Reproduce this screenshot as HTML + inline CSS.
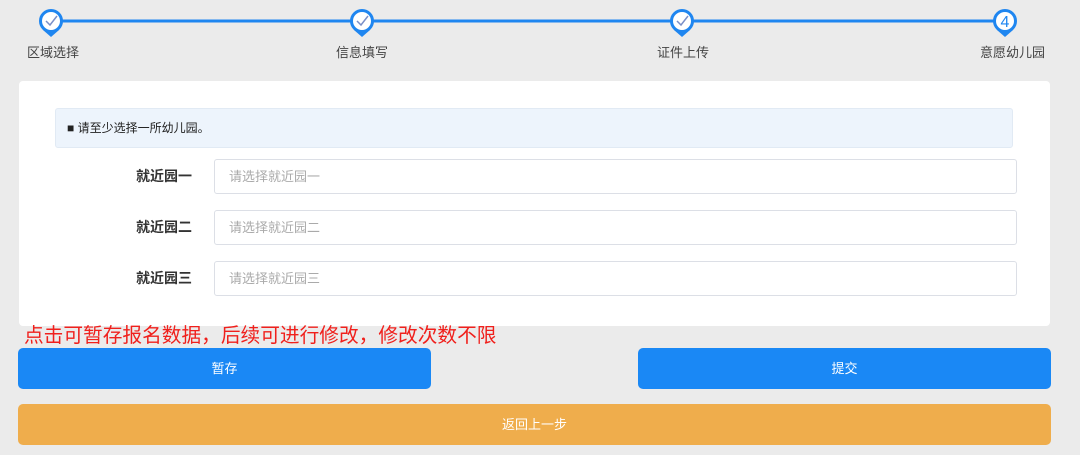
<!DOCTYPE html>
<html><head><meta charset="utf-8"><style>
body{margin:0;width:1080px;height:455px;background:#ebebeb;font-family:"Liberation Sans","Noto Sans CJK SC",sans-serif;position:relative;overflow:hidden}
.abs{position:absolute}
.lbl{position:absolute;top:42px;font-size:13px;color:#444;white-space:nowrap}
.card{position:absolute;left:19px;top:81px;width:1031px;height:245px;background:#fff;border-radius:4px}
.info{position:absolute;left:55px;top:108px;width:958px;height:40px;background:#edf4fc;border:1px solid #e1eaf4;box-sizing:border-box;border-radius:3px;font-size:12px;color:#222;line-height:38px;padding-left:11px}
.row{position:absolute;left:0;width:1080px;height:35px}
.row b{position:absolute;left:136px;top:0;line-height:35px;font-size:14px;color:#333}
.row div{position:absolute;left:214px;top:0;width:803px;height:35px;box-sizing:border-box;border:1px solid #dcdfe6;border-radius:3px;font-size:13px;color:#aaa;line-height:33px;padding-left:14px}
.btn{position:absolute;height:41px;border-radius:5px;color:#fff;font-size:13px;text-align:center;line-height:41px}
</style></head><body>
<svg class="abs" style="left:0;top:0" width="1080" height="42">
<line x1="51" y1="21" x2="1005" y2="21" stroke="#1f86f0" stroke-width="3"/>
<g fill="#fff" stroke="#1f86f0" stroke-width="3">
<path d="M43 30 L51 37 L59 30 Z" fill="#1f86f0" stroke="none"/><circle cx="51" cy="21" r="10.5"/>
<path d="M354 30 L362 37 L370 30 Z" fill="#1f86f0" stroke="none"/><circle cx="362" cy="21" r="10.5"/>
<path d="M674 30 L682 37 L690 30 Z" fill="#1f86f0" stroke="none"/><circle cx="682" cy="21" r="10.5"/>
<path d="M997 30 L1005 37 L1013 30 Z" fill="#1f86f0" stroke="none"/><circle cx="1005" cy="21" r="10.5"/>
</g>
<g fill="none" stroke="#7a8fc8" stroke-width="1.5">
<path d="M46 21 L50 25 L57 16"/><path d="M357 21 L361 25 L368 16"/><path d="M677 21 L681 25 L688 16"/>
</g>
<text x="1005" y="27" font-size="16" fill="#1f86f0" text-anchor="middle" font-family="Liberation Sans">4</text>
</svg>
<span class="lbl" style="left:27px">区域选择</span>
<span class="lbl" style="left:336px">信息填写</span>
<span class="lbl" style="left:657px">证件上传</span>
<span class="lbl" style="left:980px">意愿幼儿园</span>
<div class="card"></div>
<div class="info">■ 请至少选择一所幼儿园。</div>
<div class="row" style="top:159px"><b>就近园一</b><div>请选择就近园一</div></div>
<div class="row" style="top:210px"><b>就近园二</b><div>请选择就近园二</div></div>
<div class="row" style="top:261px"><b>就近园三</b><div>请选择就近园三</div></div>
<div class="abs" style="left:24px;top:319px;font-size:19.7px;color:#f0201c;white-space:nowrap">点击可暂存报名数据，后续可进行修改，修改次数不限</div>
<div class="btn" style="left:18px;top:348px;width:413px;background:#1a88f5">暂存</div>
<div class="btn" style="left:638px;top:348px;width:413px;background:#1a88f5">提交</div>
<div class="btn" style="left:18px;top:404px;width:1033px;background:#efad4c">返回上一步</div>
</body></html>
